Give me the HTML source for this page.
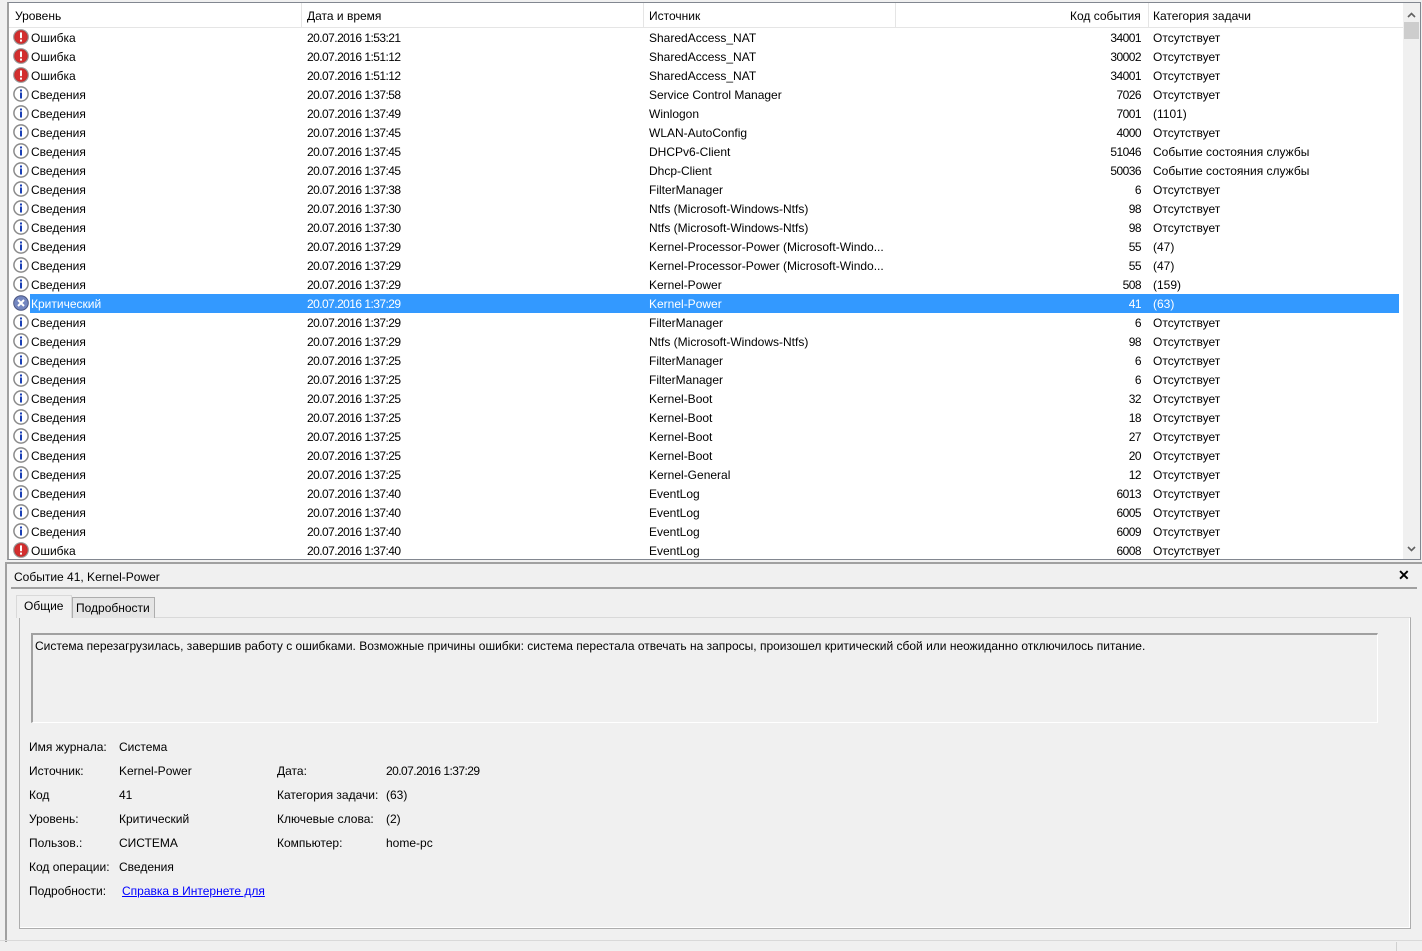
<!DOCTYPE html>
<html><head><meta charset="utf-8">
<style>
*{margin:0;padding:0;box-sizing:border-box}
body{width:1422px;height:951px;background:#f0f0f0;font-family:"Liberation Sans",sans-serif;font-size:12px;color:#000;position:relative;overflow:hidden}
.abs{position:absolute;white-space:nowrap}
#list{position:absolute;left:7px;top:2px;width:1414px;height:558px;background:#fff;border:1px solid #828790;border-left:2px solid #a0a0a0;overflow:hidden}
.hdr{position:absolute;top:0;left:0;width:1394px;height:25px;background:#fff;border-bottom:1px solid #e5e5e5}
.hdr span{position:absolute;top:6px}
.sep{position:absolute;top:0;width:1px;height:25px;background:#e5e5e5}
.row{position:absolute;left:0;width:1390px;height:19px}
.row span{position:absolute;top:3px}
.sel{color:#fff}
.sel .bg{position:absolute;left:21px;right:0;top:0;bottom:0;background:#3399ff}
.ic{position:absolute;left:4px;top:1px;width:16px;height:16px}
.r{text-align:right}
.n{letter-spacing:-0.55px}
#sb{position:absolute;right:0;top:0;width:17px;height:556px;background:#f0f0f0}
</style></head><body>
<div id="list">
<div class="hdr">
<span style="left:6px">Уровень</span><div class="sep" style="left:292px"></div>
<span style="left:298px">Дата и время</span><div class="sep" style="left:634px"></div>
<span style="left:640px">Источник</span><div class="sep" style="left:886px"></div>
<span style="left:1061px">Код события</span><div class="sep" style="left:1139px"></div>
<span style="left:1144px">Категория задачи</span>
</div>
<div id="rows"></div>
<div id="sb">
<svg class="abs" style="left:4px;top:9px" width="9" height="6"><path d="M1 5 L4.5 1.5 L8 5" stroke="#606060" stroke-width="1.6" fill="none"/></svg>
<div class="abs" style="left:1px;top:19px;width:15px;height:17px;background:#cdcdcd"></div>
<svg class="abs" style="left:4px;top:543px" width="9" height="6"><path d="M1 1 L4.5 4.5 L8 1" stroke="#606060" stroke-width="1.6" fill="none"/></svg>
</div>
</div>
<script>
var E='<svg class="ic" viewBox="0 0 16 16"><circle cx="8" cy="8" r="7.3" fill="#c62828" stroke="#999" stroke-width="1.2"/><circle cx="8" cy="8" r="5.8" fill="#d32f2f"/><rect x="7" y="3.3" width="2" height="6" rx="0.8" fill="#fff"/><rect x="7" y="10.6" width="2" height="2" fill="#fff"/></svg>';
var I='<svg class="ic" viewBox="0 0 16 16"><circle cx="8" cy="8" r="7.1" fill="#fff" stroke="#8a8a8a" stroke-width="1.5"/><rect x="7" y="6.5" width="2" height="6" fill="#1a3fb5"/><rect x="7" y="3.5" width="2" height="2" fill="#1a3fb5"/></svg>';
var C='<svg class="ic" viewBox="0 0 16 16"><circle cx="8" cy="8" r="7.3" fill="#7386c0" stroke="#4a5580" stroke-width="1"/><path d="M5 5 L11 11 M11 5 L5 11" stroke="#fff" stroke-width="2"/></svg>';
var d=[
['E','Ошибка','1:53:21','SharedAccess_NAT','34001','Отсутствует'],
['E','Ошибка','1:51:12','SharedAccess_NAT','30002','Отсутствует'],
['E','Ошибка','1:51:12','SharedAccess_NAT','34001','Отсутствует'],
['I','Сведения','1:37:58','Service Control Manager','7026','Отсутствует'],
['I','Сведения','1:37:49','Winlogon','7001','(1101)'],
['I','Сведения','1:37:45','WLAN-AutoConfig','4000','Отсутствует'],
['I','Сведения','1:37:45','DHCPv6-Client','51046','Событие состояния службы'],
['I','Сведения','1:37:45','Dhcp-Client','50036','Событие состояния службы'],
['I','Сведения','1:37:38','FilterManager','6','Отсутствует'],
['I','Сведения','1:37:30','Ntfs (Microsoft-Windows-Ntfs)','98','Отсутствует'],
['I','Сведения','1:37:30','Ntfs (Microsoft-Windows-Ntfs)','98','Отсутствует'],
['I','Сведения','1:37:29','Kernel-Processor-Power (Microsoft-Windo...','55','(47)'],
['I','Сведения','1:37:29','Kernel-Processor-Power (Microsoft-Windo...','55','(47)'],
['I','Сведения','1:37:29','Kernel-Power','508','(159)'],
['C','Критический','1:37:29','Kernel-Power','41','(63)'],
['I','Сведения','1:37:29','FilterManager','6','Отсутствует'],
['I','Сведения','1:37:29','Ntfs (Microsoft-Windows-Ntfs)','98','Отсутствует'],
['I','Сведения','1:37:25','FilterManager','6','Отсутствует'],
['I','Сведения','1:37:25','FilterManager','6','Отсутствует'],
['I','Сведения','1:37:25','Kernel-Boot','32','Отсутствует'],
['I','Сведения','1:37:25','Kernel-Boot','18','Отсутствует'],
['I','Сведения','1:37:25','Kernel-Boot','27','Отсутствует'],
['I','Сведения','1:37:25','Kernel-Boot','20','Отсутствует'],
['I','Сведения','1:37:25','Kernel-General','12','Отсутствует'],
['I','Сведения','1:37:40','EventLog','6013','Отсутствует'],
['I','Сведения','1:37:40','EventLog','6005','Отсутствует'],
['I','Сведения','1:37:40','EventLog','6009','Отсутствует'],
['E','Ошибка','1:37:40','EventLog','6008','Отсутствует']];
var h='';
d.forEach(function(r,i){
var ic=r[0]=='E'?E:r[0]=='I'?I:C;
h+='<div class="row'+(r[0]=='C'?' sel':'')+'" style="top:'+(25+i*19)+'px">'+(r[0]=='C'?'<div class="bg"></div>':'')+ic+
'<span style="left:22px">'+r[1]+'</span><span class="n" style="left:298px">20.07.2016 '+r[2]+'</span><span style="left:640px">'+r[3]+
'</span><span class="r n" style="left:1032px;width:100px">'+r[4]+'</span><span style="left:1144px">'+r[5]+'</span></div>';});
document.getElementById('rows').innerHTML=h;
</script>
<div class="abs" style="left:5px;top:562px;width:1417px;height:380px;border-left:2px solid #a0a0a0;border-top:2px solid #a0a0a0"></div>
<div class="abs" style="left:14px;top:570px">Событие 41, Kernel-Power</div>
<div class="abs" style="left:1398px;top:567px;font-weight:bold;font-size:14px">✕</div>
<div class="abs" style="left:11px;top:587px;width:1406px;height:2px;background:#a0a0a0"></div>
<div class="abs" style="left:19px;top:617px;width:1392px;height:312px;border:1px solid #adadad;border-top:1px solid #d9d9d9;background:#f0f0f0;box-shadow:inset -1px -1px 0 #fff"></div>
<div class="abs" style="left:16px;top:595px;width:56px;height:23px;background:#f0f0f0;border:1px solid #d9d9d9;border-bottom:none"></div>
<div class="abs" style="left:24px;top:599px">Общие</div>
<div class="abs" style="left:72px;top:597px;width:83px;height:21px;background:#e5e5e5;border:1px solid #adadad;border-bottom:none"></div>
<div class="abs" style="left:76px;top:601px">Подробности</div>
<div class="abs" style="left:31px;top:633px;width:1347px;height:90px;background:#f0f0f0;border:1px solid #fff;border-top:2px solid #a0a0a0;border-left:2px solid #a0a0a0"></div>
<div class="abs" style="left:35px;top:639px">Система перезагрузилась, завершив работу с ошибками. Возможные причины ошибки: система перестала отвечать на запросы, произошел критический сбой или неожиданно отключилось питание.</div>
<div class="abs" style="left:29px;top:740px">Имя журнала:</div><div class="abs" style="left:119px;top:740px">Система</div>
<div class="abs" style="left:29px;top:764px">Источник:</div><div class="abs" style="left:119px;top:764px">Kernel-Power</div>
<div class="abs" style="left:277px;top:764px">Дата:</div><div class="abs n" style="left:386px;top:764px">20.07.2016 1:37:29</div>
<div class="abs" style="left:29px;top:788px">Код</div><div class="abs" style="left:119px;top:788px">41</div>
<div class="abs" style="left:277px;top:788px">Категория задачи:</div><div class="abs" style="left:386px;top:788px">(63)</div>
<div class="abs" style="left:29px;top:812px">Уровень:</div><div class="abs" style="left:119px;top:812px">Критический</div>
<div class="abs" style="left:277px;top:812px">Ключевые слова:</div><div class="abs" style="left:386px;top:812px">(2)</div>
<div class="abs" style="left:29px;top:836px">Пользов.:</div><div class="abs" style="left:119px;top:836px">СИСТЕМА</div>
<div class="abs" style="left:277px;top:836px">Компьютер:</div><div class="abs" style="left:386px;top:836px">home-pc</div>
<div class="abs" style="left:29px;top:860px">Код операции:</div><div class="abs" style="left:119px;top:860px">Сведения</div>
<div class="abs" style="left:29px;top:884px">Подробности:</div><div class="abs" style="left:122px;top:884px;color:#0000ff;text-decoration:underline">Справка в Интернете для </div>
<div class="abs" style="left:0;top:940px;width:1422px;height:1px;background:#d9d9d9"></div>
<div class="abs" style="left:1396px;top:942px;width:1px;height:9px;background:#d0d0d0"></div>
</body></html>
